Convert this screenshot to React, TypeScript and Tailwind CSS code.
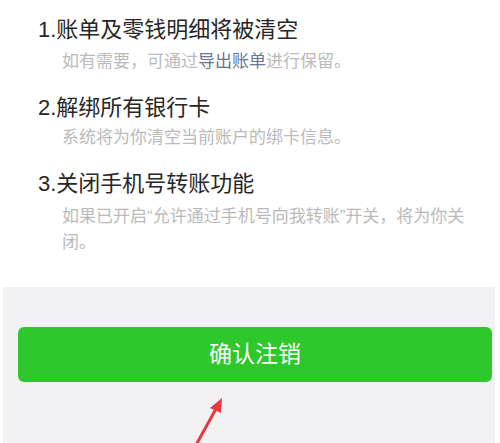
import React from "react";

export default function App() {
  const font = { fontFamily: '"Liberation Sans", "Noto Sans CJK SC", sans-serif' };
  return (
    <div className="relative w-[500px] h-[443px] bg-white overflow-hidden" style={font}>
      <div className="flex flex-col h-full pl-[3px] pr-[5px]">
        <div className="h-[287px] bg-white pt-[15px] pl-[35px]">
          <div className="text-[22px] leading-[30px] text-[#262626]">1.账单及零钱明细将被清空</div>
          <div className="mt-[4px] pl-[24px] w-[436px] text-[17px] leading-[26px] text-[#bababa]">
            如有需要，可通过<span className="text-[#66769a]">导出账单</span>进行保留。
          </div>
          <div className="mt-[18px] text-[22px] leading-[30px] text-[#262626]">2.解绑所有银行卡</div>
          <div className="mt-[2px] pl-[24px] w-[436px] text-[17px] leading-[26px] text-[#bababa]">
            系统将为你清空当前账户的绑卡信息。
          </div>
          <div className="mt-[18px] text-[22px] leading-[30px] text-[#262626]">3.关闭手机号转账功能</div>
          <div className="mt-[5px] pl-[24px] w-[436px] text-[17px] leading-[26px] text-[#bababa]">
            如果已开启“允许通过手机号向我转账”开关，将为你关闭。
          </div>
        </div>
        <div className="flex-1 bg-[#f2f2f5] pt-[40px] pl-[15px] pr-[3px]">
          <button className="w-full h-[55px] rounded-[6px] bg-[#2ec72c] text-white text-[23px] flex items-center justify-center">
            确认注销
          </button>
        </div>
      </div>
      <svg className="absolute left-0 top-0" width="500" height="443" viewBox="0 0 500 443">
        <line x1="196" y1="445" x2="217" y2="407" stroke="#e8393f" strokeWidth="3" strokeLinecap="round" />
        <polygon points="222,398 210,408 221,413" fill="#e8393f" />
      </svg>
    </div>
  );
}
